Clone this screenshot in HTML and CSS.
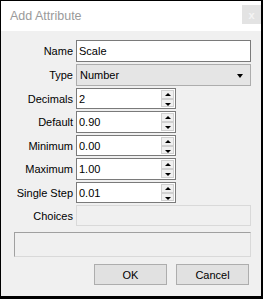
FILE: index.html
```html
<!DOCTYPE html>
<html>
<head>
<meta charset="utf-8">
<link rel="stylesheet" href="styles.css">
</head>
<body>
<div class="window">
  <div class="titlebar">
    <span class="title">Add Attribute</span>
    <span class="close">x</span>
  </div>
  <div class="content">
    <div class="form">
      <label class="lbl">Name</label>
      <div class="field text"><span>Scale</span></div>

      <label class="lbl">Type</label>
      <div class="field combo"><span>Number</span><i class="arrow"></i></div>

      <label class="lbl">Decimals</label>
      <div class="field spin"><span>2</span><div class="spinbtns"><b class="up"></b><b class="down"></b></div></div>

      <label class="lbl">Default</label>
      <div class="field spin"><span>0.90</span><div class="spinbtns"><b class="up"></b><b class="down"></b></div></div>

      <label class="lbl">Minimum</label>
      <div class="field spin"><span>0.00</span><div class="spinbtns"><b class="up"></b><b class="down"></b></div></div>

      <label class="lbl">Maximum</label>
      <div class="field spin"><span>1.00</span><div class="spinbtns"><b class="up"></b><b class="down"></b></div></div>

      <label class="lbl">Single Step</label>
      <div class="field spin"><span>0.01</span><div class="spinbtns"><b class="up"></b><b class="down"></b></div></div>

      <label class="lbl">Choices</label>
      <div class="field disabled"></div>
    </div>
    <div class="bigbox"></div>
    <div class="buttons">
      <button class="btn">OK</button>
      <button class="btn">Cancel</button>
    </div>
  </div>
</div>
</body>
</html>
```
FILE: styles.css
```css
* { box-sizing: border-box; }
html, body { margin: 0; padding: 0; background: #000; }
body { font-family: "Liberation Sans", Arial, sans-serif; font-size: 11px; color: #000; }

.window {
  width: 263px;
  height: 299px;
  border-top: 1px solid #000;
  border-left: 1px solid #000;
  border-right: 2px solid #000;
  border-bottom: 3px solid #000;
  background: #f0f0f0;
  display: flex;
  flex-direction: column;
}

.titlebar {
  height: 30px;
  background: #fff;
  display: flex;
  align-items: center;
  justify-content: space-between;
  padding-left: 9px;
  padding-right: 0;
}
.title {
  font-size: 12.5px;
  color: #9a9a9a;
  margin-top: -1px;
}
.close {
  width: 19px;
  height: 19px;
  background: #e3e3e3;
  color: #f4f4f4;
  font-size: 11px;
  font-weight: bold;
  display: flex;
  align-items: center;
  justify-content: center;
  margin-top: -3px;
}

.content {
  padding: 9px 11px 0 12px;
  display: flex;
  flex-direction: column;
}

.form {
  display: grid;
  grid-template-columns: 60px 175px;
  grid-template-rows: 22px 22px 21px 22px 21px 22px 21px 21px;
  column-gap: 3px;
  row-gap: 2px;
}
.lbl {
  display: flex;
  align-items: center;
  justify-content: flex-end;
  white-space: nowrap;
}

.field {
  height: 100%;
  display: flex;
  align-items: center;
  padding-left: 2px;
  position: relative;
}
.text {
  border: 1px solid #7a7a7a;
  background: #fff;
}
.combo {
  border: 1px solid #adadad;
  background: #e5e5e5;
  padding-left: 3px;
}
.combo .arrow {
  position: absolute;
  right: 7px;
  top: 9px;
  width: 0;
  height: 0;
  border-left: 3.5px solid transparent;
  border-right: 3.5px solid transparent;
  border-top: 4px solid #000;
}
.spin {
  width: 100px;
  border: 1px solid #7a7a7a;
  background: #fff;
}
.spinbtns {
  position: absolute;
  right: 1px;
  top: 1px;
  bottom: 1px;
  width: 13px;
  display: flex;
  flex-direction: column;
}
.spinbtns b {
  flex: 1;
  background: #f0f0f0;
  border: 1px solid #d0d0d0;
  position: relative;
}
.spinbtns b::after {
  content: "";
  position: absolute;
  left: 3px;
  width: 0;
  height: 0;
  border-left: 3px solid transparent;
  border-right: 3px solid transparent;
}
.spinbtns .up::after { top: 2px; border-bottom: 3px solid #000; }
.spinbtns .down::after { top: 3px; border-top: 3px solid #000; }

.disabled {
  border: 1px solid #d9d9d9;
  background: #f0f0f0;
}

.bigbox {
  margin-top: 6px;
  margin-left: 1px;
  width: 237px;
  height: 25px;
  border: 1px solid #d9d9d9;
  border-top-color: #a0a0a0;
  border-left-color: #a0a0a0;
  background: #f0f0f0;
}

.buttons {
  display: flex;
  justify-content: flex-end;
  gap: 9px;
  margin-top: 7px;
  padding-right: 1px;
}
.btn {
  width: 73px;
  height: 21px;
  background: #e1e1e1;
  border: 1px solid #adadad;
  font-family: "Liberation Sans", Arial, sans-serif;
  font-size: 11px;
  color: #000;
  padding: 0;
}
```
